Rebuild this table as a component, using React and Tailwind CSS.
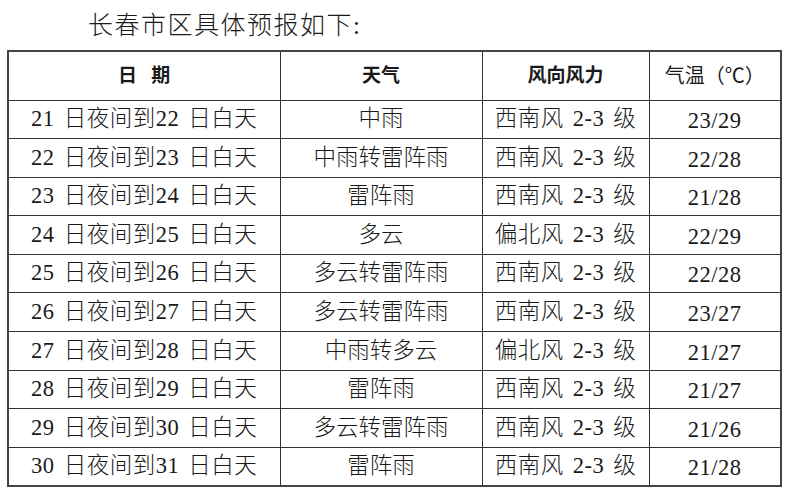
import React from "react";

const ROWS = [
  ["21 日夜间到22 日白天", "中雨", "西南风 2-3 级", "23/29"],
  ["22 日夜间到23 日白天", "中雨转雷阵雨", "西南风 2-3 级", "22/28"],
  ["23 日夜间到24 日白天", "雷阵雨", "西南风 2-3 级", "21/28"],
  ["24 日夜间到25 日白天", "多云", "偏北风 2-3 级", "22/29"],
  ["25 日夜间到26 日白天", "多云转雷阵雨", "西南风 2-3 级", "22/28"],
  ["26 日夜间到27 日白天", "多云转雷阵雨", "西南风 2-3 级", "23/27"],
  ["27 日夜间到28 日白天", "中雨转多云", "偏北风 2-3 级", "21/27"],
  ["28 日夜间到29 日白天", "雷阵雨", "西南风 2-3 级", "21/27"],
  ["29 日夜间到30 日白天", "多云转雷阵雨", "西南风 2-3 级", "21/26"],
  ["30 日夜间到31 日白天", "雷阵雨", "西南风 2-3 级", "21/28"],
];

const FONT = { fontFamily: '"Liberation Serif", "Noto Sans CJK SC", serif' };

export default function App() {
  return (
    <div className="w-[795px] h-[500px] bg-white text-[#1a1a1a] overflow-hidden" style={FONT}>
      <div className="pl-[88px] pt-[9px] h-[50px] text-[25px] leading-[34px] tracking-[1.5px] font-light">
        长春市区具体预报如下:
      </div>
      <table className="ml-[7px] border-collapse border-2 border-[#444] table-fixed w-[773px]">
        <colgroup>
          <col className="w-[272px]" />
          <col className="w-[202px]" />
          <col className="w-[167px]" />
          <col className="w-[132px]" />
        </colgroup>
        <thead>
          <tr className="h-[49px] text-[19px] font-bold">
            <th className="border border-[#333] whitespace-pre">日   期</th>
            <th className="border border-[#333]">天气</th>
            <th className="border border-[#333]">风向风力</th>
            <th className="border border-[#333] font-normal text-[20px]">气温（℃）</th>
          </tr>
        </thead>
        <tbody>
          {ROWS.map((r, i) => (
            <tr key={i} className="h-[38.6px] text-[22.5px] font-light [word-spacing:3px]">
              <td className="border border-[#333] text-center leading-none tracking-[0.5px]">{r[0]}</td>
              <td className="border border-[#333] text-center leading-none">{r[1]}</td>
              <td className="border border-[#333] text-center leading-none tracking-[0.5px]">{r[2]}</td>
              <td className="border border-[#333] text-center leading-none pt-[4px] tracking-[0.5px]">{r[3]}</td>
            </tr>
          ))}
        </tbody>
      </table>
    </div>
  );
}
